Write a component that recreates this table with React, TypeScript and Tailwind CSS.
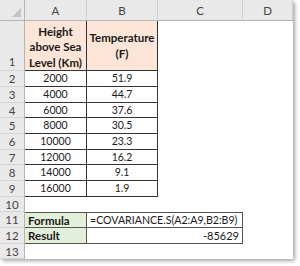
import React from "react";

type Row = { n: number; a: string; b: string };

const data: Row[] = [
  { n: 2, a: "2000", b: "51.9" },
  { n: 3, a: "4000", b: "44.7" },
  { n: 4, a: "6000", b: "37.6" },
  { n: 5, a: "8000", b: "30.5" },
  { n: 6, a: "10000", b: "23.3" },
  { n: 7, a: "12000", b: "16.2" },
  { n: 8, a: "14000", b: "9.1" },
  { n: 9, a: "16000", b: "1.9" },
];

const RowHead = ({ n }: { n: number }) => (
  <div className="flex items-center justify-center bg-[#e9e9e9] border-r border-r-[#b4b4b4] border-b border-b-[#d4d4d4] text-[#444] text-[11.5px]">
    {n}
  </div>
);

const App = () => {
  return (
    <div className="w-[300px] h-[266px] bg-white font-['Lato',sans-serif] text-[#1a1a1a]">
      <div className="grid w-[293px] h-[259px] grid-cols-[25px_62px_71px_85px_50px] grid-rows-[21px_50px_16px_16px_15px_16px_16px_15px_16px_16px_15px_16px_16px_15px] bg-white shadow-[2px_2px_4px_rgba(0,0,0,0.35)] text-[10.5px] leading-[15px]">
        {/* header row */}
        <div className="relative bg-[#e9e9e9] border-r border-r-[#b4b4b4] border-b border-b-[#b4b4b4]">
          <svg className="absolute right-[3px] bottom-[3px]" width="9" height="9" viewBox="0 0 9 9">
            <polygon points="9,0 9,9 0,9" fill="#c4c4c4" />
          </svg>
        </div>
        {["A", "B", "C", "D"].map((c) => (
          <div
            key={c}
            className="flex items-center justify-center bg-[#e9e9e9] border-r border-r-[#d0d0d0] border-b border-b-[#b4b4b4] text-[#444] text-[11.5px]"
          >
            {c}
          </div>
        ))}

        {/* row 1 */}
        <div className="flex items-end justify-center pb-[1px] bg-[#e9e9e9] border-r border-r-[#b4b4b4] border-b border-b-[#d4d4d4] text-[#444] text-[11.5px]">
          1
        </div>
        <div className="flex items-end justify-center bg-[#fce4d6] border-r border-r-[#333] border-b border-b-[#333] font-bold text-center text-[11.5px] leading-[15.5px]">
          Height
          <br />
          above Sea
          <br />
          Level (Km)
        </div>
        <div className="flex items-center justify-center bg-[#fce4d6] border-r border-r-[#333] border-b border-b-[#333] font-bold text-center text-[11.5px] leading-[15.5px] overflow-hidden whitespace-nowrap">
          <span>
            Temperature
            <br />
            (F)
          </span>
        </div>
        <div />
        <div />

        {/* rows 2-9 */}
        {data.map((r) => (
          <React.Fragment key={r.n}>
            <RowHead n={r.n} />
            <div className="flex items-center justify-center border-r border-r-[#333] border-b border-b-[#333]">
              {r.a}
            </div>
            <div className="flex items-center justify-center border-r border-r-[#333] border-b border-b-[#333]">
              {r.b}
            </div>
            <div />
            <div />
          </React.Fragment>
        ))}

        {/* row 10 */}
        <RowHead n={10} />
        <div />
        <div />
        <div />
        <div />

        {/* row 11 */}
        <RowHead n={11} />
        <div className="flex items-center pl-[3px] bg-[#e2efda] border-t border-t-[#555] border-r border-r-[#555] border-b border-b-[#555] font-bold text-[11.5px]">
          Formula
        </div>
        <div className="col-span-2 flex items-center pl-[3px] border-t border-t-[#555] border-r border-r-[#555] border-b border-b-[#555] whitespace-nowrap text-[10.6px]">
          =COVARIANCE.S(A2:A9,B2:B9)
        </div>
        <div />

        {/* row 12 */}
        <RowHead n={12} />
        <div className="flex items-center pl-[3px] bg-[#e2efda] border-r border-r-[#555] border-b border-b-[#555] font-bold text-[11.5px]">
          Result
        </div>
        <div className="col-span-2 flex items-center justify-end pr-[3px] border-r border-r-[#555] border-b border-b-[#555] text-[11px]">
          -85629
        </div>
        <div />

        {/* row 13 */}
        <RowHead n={13} />
        <div />
        <div />
        <div />
        <div />
      </div>
    </div>
  );
};

export default App;
